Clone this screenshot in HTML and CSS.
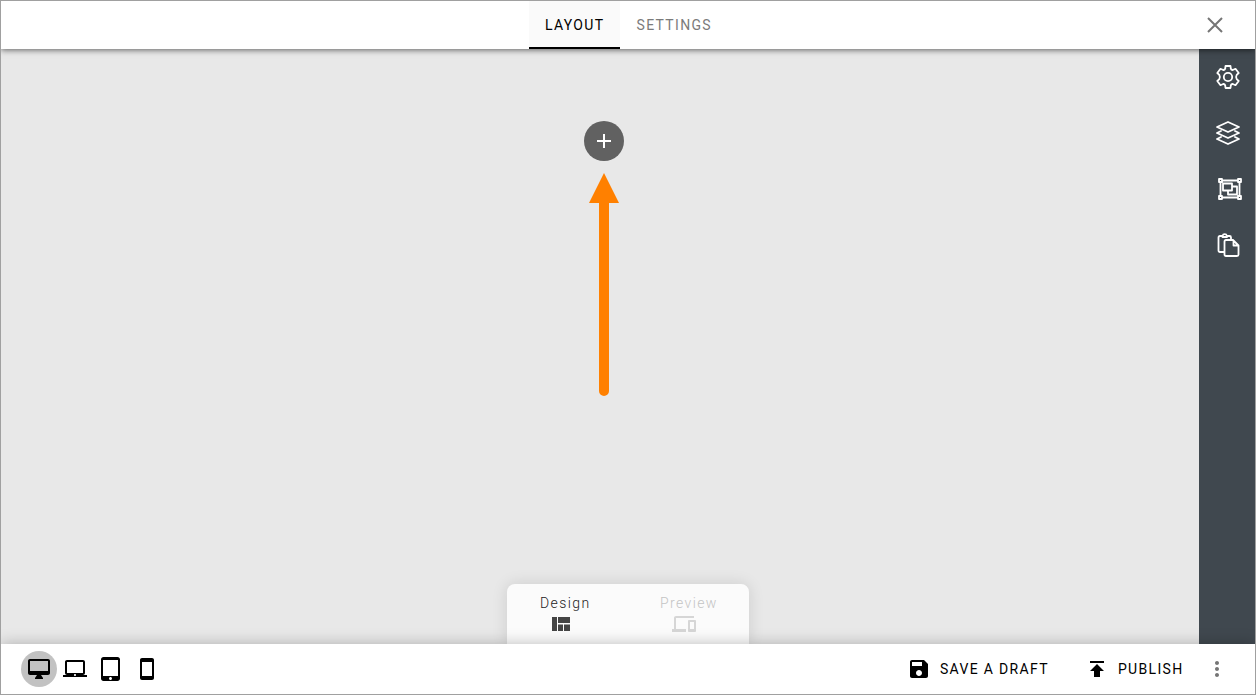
FILE: index.html
```html
<!DOCTYPE html>
<html lang="en">
<head>
<meta charset="utf-8">
<title>Layout editor</title>
<link rel="stylesheet" href="styles.css">
</head>
<body>
<div class="app">
  <header class="topbar">
    <nav class="tabs">
      <a class="tab tab-active">LAYOUT</a>
      <a class="tab">SETTINGS</a>
    </nav>
    <svg class="close" width="24" height="24" viewBox="0 0 24 24"><path d="M5 5l14 14M19 5L5 19" fill="none" stroke="#757575" stroke-width="2"/></svg>
  </header>
  <main class="workspace">
    <section class="canvas">
      <button class="add"><svg width="24" height="24" viewBox="0 0 24 24"><path d="M19 13h-6v6h-2v-6H5v-2h6V5h2v6h6v2z" fill="#fff"/></svg></button>
      <svg class="arrow" width="30" height="224" viewBox="0 0 30 224"><path d="M15 0L30 30H20V218a5 5 0 0 1-10 0V30H0z" fill="#ff8000"/></svg>
      <div class="modes">
        <div class="mode mode-design"><span>Design</span>
          <svg width="24" height="24" viewBox="0 0 24 24"><path d="M3 5h5v14H3zM9 5h12v6H9zM9 12.500h5V19H9zM15 12.500h6V19h-6z"/></svg>
        </div>
        <div class="mode mode-preview"><span>Preview</span>
          <svg width="24" height="24" viewBox="0 0 24 24"><path d="M4 6h18V4H4c-1.100 0-2 .9-2 2v11H0v3h14v-3H4V6zm19 2h-6c-.55 0-1 .45-1 1v10c0 .55.45 1 1 1h6c.55 0 1-.45 1-1V9c0-.55-.45-1-1-1zm-1 9h-4v-7h4v7z"/></svg>
        </div>
      </div>
    </section>
    <aside class="sidebar">
      <svg width="24" height="24" viewBox="0 0 24 24"><path d="M9.500 1h5l.3 2.600q.5 1.500 2 1.400l2.700-1.200 3.200 4.200-2 1.900q-1.200 2.100 0 4.200l2 1.900-3.200 4.200-2.700-1.200q-1.500-.1-2 1.400l-.3 2.600h-5l-.3-2.600q-.5-1.500-2-1.400l-2.700 1.200L1.300 16l2-1.900q1.200-2.100 0-4.200l-2-1.900 3.200-4.200L7.200 5q1.500.1 2-1.400z"/><circle cx="12" cy="12" r="4.200"/></svg>
      <svg width="24" height="24" viewBox="0 0 24 24"><path d="M12 1l11 5-11 5L1 6z"/><path d="M5 10l-4 2 11 5 11-5-4-2M5 16l-4 2 11 5 11-5-4-2"/></svg>
      <svg class="shift" width="24" height="24" viewBox="0 0 24 24"><path d="M2.500 5v14M21.500 5v14M4 3.500h16M4 20.500h16M1 2h3v3H1zM20 2h3v3h-3zM1 19h3v3H1zM20 19h3v3h-3zM5 6.500h9v7H5zM14 9.500h5v8h-9v-4"/></svg>
      <svg width="24" height="24" viewBox="0 0 24 24"><path d="M7.500 19H4q-1.500 0-1.500-1.500V4.500Q2.500 3 4 3h2.500Q7 1.200 8.700 1.200T11 3h2.500Q15 3 15 4.500V6M6.500 4h4.500M10.500 7H17l5.500 5.500v9q0 1.500-1.500 1.500H10q-1.500 0-1.500-1.500V8.500Q8.500 7 10 7zM17.500 7.500v5h5"/></svg>
    </aside>
  </main>
  <footer class="bottombar">
    <div class="devices">
      <span class="device device-active"><svg width="24" height="24" viewBox="0 0 24 24"><path d="M21 2H3c-1.100 0-2 .9-2 2v12c0 1.100.9 2 2 2h7l-2 3v1h8v-1l-2-3h7c1.100 0 2-.9 2-2V4c0-1.100-.9-2-2-2zm0 12H3V4h18v10z"/></svg></span>
      <span class="device"><svg width="24" height="24" viewBox="0 0 24 24"><path d="M20 18c1.100 0 1.990-.9 1.990-2L22 5c0-1.100-.9-2-2-2H4c-1.100 0-2 .9-2 2v11c0 1.100.9 2 2 2H0v2h24v-2h-4zM4 5h16v11H4V5zm8 14c-.55 0-1-.45-1-1s.45-1 1-1 1 .45 1 1-.45 1-1 1z"/></svg></span>
      <span class="device"><svg width="24" height="24" viewBox="0 0 24 24"><path d="M18.500 0h-14C3.120 0 2 1.120 2 2.500v19C2 22.880 3.120 24 4.500 24h14c1.380 0 2.500-1.120 2.500-2.500v-19C21 1.120 19.880 0 18.500 0zm-7 23c-.83 0-1.500-.67-1.500-1.500s.67-1.500 1.500-1.500 1.500.67 1.500 1.500-.67 1.500-1.500 1.500zm7.500-4H4V3h15v16z"/></svg></span>
      <span class="device"><svg width="24" height="24" viewBox="0 0 24 24"><path d="M17 1.010L7 1c-1.100 0-1.990.9-1.990 2v18c0 1.100.89 2 1.990 2h10c1.100 0 2-.9 2-2V3c0-1.100-.9-1.990-2-1.990zM17 19H7V5h10v14z"/></svg></span>
    </div>
    <div class="actions">
      <span class="action save"><svg width="24" height="24" viewBox="0 0 24 24"><path d="M17 3H5c-1.110 0-2 .9-2 2v14c0 1.100.89 2 2 2h14c1.100 0 2-.9 2-2V7l-4-4zm-5 16c-1.660 0-3-1.340-3-3s1.340-3 3-3 3 1.340 3 3-1.340 3-3 3zm3-10H5V5h10v4z"/></svg>SAVE A DRAFT</span>
      <span class="action publish"><svg width="24" height="24" viewBox="0 0 24 24"><path d="M5 4v2h14V4H5zm0 10h4v6h6v-6h4l-7-7-7 7z"/></svg>PUBLISH</span>
      <svg class="more" width="24" height="24" viewBox="0 0 24 24"><path d="M12 8c1.100 0 2-.9 2-2s-.9-2-2-2-2 .9-2 2 .9 2 2 2zm0 2c-1.100 0-2 .9-2 2s.9 2 2 2 2-.9 2-2-.9-2-2-2zm0 6c-1.100 0-2 .9-2 2s.9 2 2 2 2-.9 2-2-.9-2-2-2z"/></svg>
    </div>
  </footer>
</div>
</body>
</html>
```
FILE: styles.css
```css
* { box-sizing: border-box; }
body { margin: 0; font: 14px/20px Roboto, sans-serif; }
svg { display: block; flex: none; }
.app { width: 1256px; height: 695px; border: 1px solid #a0a0a0; display: flex; flex-direction: column; overflow: hidden; }
.topbar { position: relative; z-index: 2; height: 48px; flex: none; display: flex; align-items: center; justify-content: space-between; padding: 0 28px 0 528px; background: #fff; box-shadow: 0 1px 6px rgba(0,0,0,.6); }
.tabs { display: flex; height: 48px; }
.tab { padding: 14px 15px 0 16px; letter-spacing: 1.33px; font-weight: 400; color: #7b7b7b; }
.tab + .tab { padding-left: 16.500px; }
.tab-active { width: 91px; background: #fafafa; color: #000; border-bottom: 2px solid #000; }
.workspace { flex: 1; display: flex; min-height: 0; }
.canvas { position: relative; flex: 1; background: #e8e8e8; display: flex; flex-direction: column; align-items: center; padding: 72px 0 0 8px; }
.add { width: 40px; height: 40px; border: 0; border-radius: 50%; background: #616161; padding: 8px; }
.arrow { margin-top: 12px; }
.modes { position: absolute; left: 506px; bottom: 0; width: 242px; height: 60px; display: flex; background: #fbfbfb; border-radius: 8px 8px 0 0; box-shadow: 0 0 16px rgba(0,0,0,.12); }
.mode { padding-top: 9px; font-weight: 300; letter-spacing: 1.4px; }
.mode-design { width: 153px; padding-left: 33px; color: #222; fill: #444; }
.mode-design svg { margin: -1px 0 0 8.500px; }
.mode-preview { color: #c4c4c4; fill: #d6d6d6; }
.mode-preview svg { margin: -1px 0 0 12px; }
.sidebar { width: 56px; display: flex; flex-direction: column; gap: 32px; padding: 16px 13px 16px 17px; background: #40484f; }
.sidebar svg { fill: none; stroke: #fff; stroke-width: 1.8; stroke-linejoin: round; stroke-linecap: round; }
.sidebar .shift { margin-left: 2px; }
.bottombar { position: relative; z-index: 2; height: 50px; flex: none; display: flex; align-items: center; justify-content: space-between; padding: 0 26px 0 20px; background: #fff; box-shadow: 0 0 14px rgba(0,0,0,.25); }
.devices { display: flex; }
.device { width: 36px; height: 36px; padding: 6px; border-radius: 50%; }
.device-active { background: #c2c2c2; }
.actions { display: flex; align-items: center; letter-spacing: 1.33px; }
.action { display: flex; align-items: center; gap: 9px; }
.publish { margin-left: 36px; }
.more { margin-left: 21.500px; fill: #757575; }
```
